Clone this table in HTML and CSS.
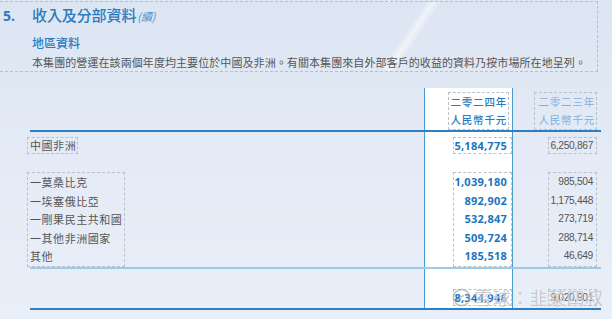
FILE: index.html
```html
<!DOCTYPE html>
<html lang="zh-Hant">
<head>
<meta charset="utf-8">
<link rel="stylesheet" href="styles.css">
</head>
<body>
<div class="page">
  <section class="intro">
    <h2 class="title"><span class="num">5.</span><span class="ttl">收入及分部資料<em class="cont">(續)</em></span></h2>
    <h3 class="sub">地區資料</h3>
    <p class="para">本集團的營運在該兩個年度均主要位於中國及非洲。有關本集團來自外部客戶的收益的資料乃按市場所在地呈列。</p>
  </section>

  <div class="table">
    <div class="hl-col"></div>

    <div class="hd hd-cur"><span>二零二四年</span><span>人民幣千元</span></div>
    <div class="hd hd-prev"><span>二零二三年</span><span>人民幣千元</span></div>

    <div class="rule rule-1"></div>

    <div class="lbl lbl-main">中國非洲</div>
    <div class="val cur row-main">5,184,775</div>
    <div class="val prev row-main">6,250,867</div>

    <div class="lbl lbl-sub">
      <span>一莫桑比克</span>
      <span>一埃塞俄比亞</span>
      <span>一剛果民主共和國</span>
      <span>一其他非洲國家</span>
      <span>其他</span>
    </div>
    <div class="val cur row-sub">
      <span>1,039,180</span>
      <span>892,902</span>
      <span>532,847</span>
      <span>509,724</span>
      <span>185,518</span>
    </div>
    <div class="val prev row-sub">
      <span>985,504</span>
      <span>1,175,448</span>
      <span>273,719</span>
      <span>288,714</span>
      <span>46,649</span>
    </div>

    <div class="rule rule-2"></div>

    <div class="val cur row-tot">8,344,946</div>
    <div class="val prev row-tot">9,020,901</div>

    <div class="rule rule-3"></div>
  </div>

  <div class="watermark">
    <svg class="wm-logo" width="19" height="19" viewBox="0 0 20 20">
      <circle cx="10" cy="10" r="8.5" fill="none" stroke="currentColor" stroke-width="2"/>
      <path d="M6 13c2-1 3-4 6-5" fill="none" stroke="currentColor" stroke-width="2" stroke-linecap="round"/>
    </svg>
    <span class="wm-text">雪球：韭菜四叔</span>
  </div>
</div>
</body>
</html>
```

FILE: styles.css
```css
* { box-sizing: border-box; }

html, body {
  margin: 0;
  padding: 0;
}

body {
  width: 612px;
  height: 319px;
  overflow: hidden;
  background: linear-gradient(to bottom, #dce5f2 0%, #e4ebf6 50%, #e9eff8 100%);
  font-family: "Noto Sans CJK TC", "Noto Sans", sans-serif;
  color: #555;
}

.page {
  position: relative;
  width: 612px;
  height: 319px;
  padding-top: 1px;
}

/* ---------- intro block ---------- */
.intro {
  width: 598px;
  border-top: 1px dashed #b9bec7;
  border-right: 1px dashed #b9bec7;
  border-bottom: 1px dashed #b9bec7;
  padding: 3px 0 1px 3px;
  background: linear-gradient(123.5deg,
      rgba(255,255,255,0) 66.2%,
      rgba(255,255,255,0.55) 67.4%,
      rgba(255,255,255,0) 68.8%);
}

.title {
  margin: 0;
  display: flex;
  align-items: baseline;
  height: 20px;
  line-height: 20px;
  font-weight: 500;
  color: #2a7bc1;
}

.num {
  width: 29px;
  font-family: "Open Sans", "Liberation Sans", sans-serif;
  font-weight: 700;
  font-size: 14px;
}

.ttl {
  font-size: 15px;
  letter-spacing: -0.1px;
}

.cont {
  font-size: 11px;
  font-style: italic;
  font-weight: 400;
  color: #4d93d2;
  margin-left: 1px;
}

.sub {
  margin: 9px 0 0 29px;
  font-size: 12px;
  line-height: 18px;
  font-weight: 500;
  color: #2a7bc1;
}

.para {
  margin: 2px 0 0 29px;
  font-size: 11px;
  line-height: 16px;
  letter-spacing: 0.08px;
  color: #555;
  white-space: nowrap;
}

/* ---------- table ---------- */
.table {
  margin: 16px 0 0 27px;
  width: 574px;
  display: grid;
  grid-template-columns: 397px 89px 88px;
  grid-template-rows: 42px 2px auto auto 2px auto auto;
}

.hl-col {
  grid-column: 2;
  grid-row: 1 / 8;
  background: #ffffff;
  border-left: 1px solid #4b9ad6;
  border-right: 1px solid #4b9ad6;
  z-index: 0;
}

.rule {
  grid-column: 1 / -1;
  margin-left: 3px;
  height: 2px;
  z-index: 2;
}
.rule-1 { grid-row: 2; background: #2d7fc2; }
.rule-2 { grid-row: 5; background: #9dcae8; }
.rule-3 { grid-row: 7; background: #2d7fc2; margin-top: 2px; }

.hd {
  grid-row: 1;
  align-self: start;
  justify-self: end;
  margin-top: 4px;
  margin-right: 4px;
  display: flex;
  flex-direction: column;
  align-items: flex-end;
  border: 1px dashed #bcc1c9;
  padding: 0 1px 0 2px;
  font-size: 10.5px;
  line-height: 18px;
  letter-spacing: 0.8px;
  z-index: 1;
}
.hd-cur { grid-column: 2; color: #2a7bc1; font-weight: 500; }
.hd-prev { grid-column: 3; color: #7fb2df; width: 63px; }

.lbl {
  grid-column: 1;
  justify-self: start;
  border: 1px dashed #bcc1c9;
  font-size: 11px;
  letter-spacing: 0.55px;
  color: #555;
  padding: 0 1px 0 2px;
  z-index: 1;
}

.lbl-main {
  grid-row: 3;
  margin-top: 5px;
  line-height: 15px;
}

.lbl-sub {
  grid-row: 4;
  margin-top: 18px;
  width: 98px;
  display: flex;
  flex-direction: column;
  line-height: 18.6px;
}

.val {
  justify-self: end;
  display: flex;
  flex-direction: column;
  align-items: flex-end;
  border: 1px dashed #bcc1c9;
  z-index: 1;
  white-space: nowrap;
}

.val.cur {
  grid-column: 2;
  margin-right: 1px;
  padding-right: 4px;
  width: 59px;
  font-family: "Open Sans", "Liberation Sans", sans-serif;
  font-weight: 700;
  font-size: 11px;
  letter-spacing: 0.25px;
  color: #1b74c0;
}

.val.prev {
  grid-column: 3;
  margin-right: 4px;
  padding-right: 3px;
  width: 49px;
  font-family: "Liberation Sans", Arial, sans-serif;
  font-size: 10.2px;
  letter-spacing: -0.3px;
  color: #555;
}

.row-main {
  grid-row: 3;
  margin-top: 5px;
  line-height: 15px;
}

.row-sub {
  grid-row: 4;
  margin-top: 18px;
  line-height: 18.6px;
}

.row-tot {
  grid-row: 6;
  margin-top: 20px;
  line-height: 15px;
}

/* ---------- watermark overlay ---------- */
.watermark {
  position: absolute;
  left: 452px;
  top: 287px;
  display: flex;
  align-items: center;
  gap: 3px;
  color: rgba(165, 168, 175, 0.6);
  z-index: 5;
  pointer-events: none;
}

.wm-logo {
  display: block;
}

.wm-text {
  font-size: 18px;
  line-height: 20px;
  letter-spacing: 0.5px;
  text-shadow: 0 0 1px rgba(255,255,255,0.9);
}
```
